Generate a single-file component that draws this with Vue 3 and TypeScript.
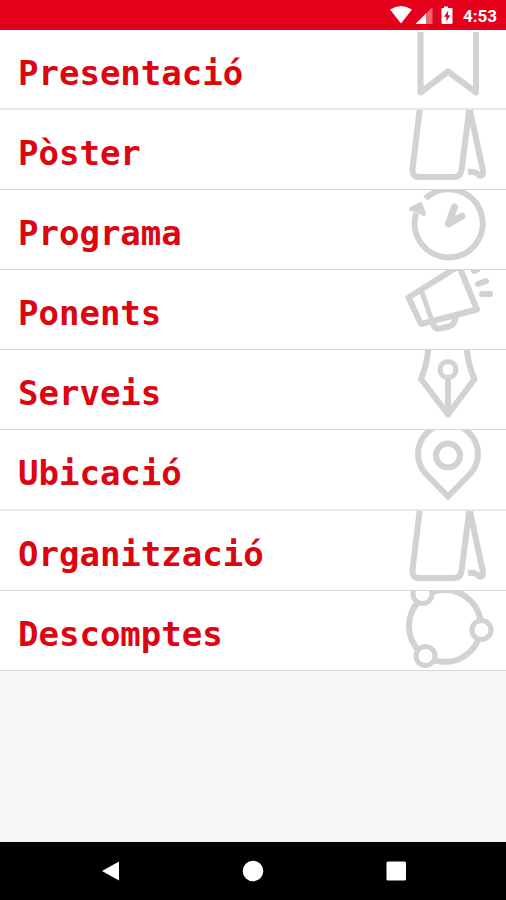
<script setup lang="ts">
interface MenuItem {
  label: string
  icon: string
  edge?: 'soft' | 'soft-tall'
}

const items: MenuItem[] = [
  { label: 'Presentació', icon: 'bookmark', edge: 'soft' },
  { label: 'Pòster', icon: 'board' },
  { label: 'Programa', icon: 'clock' },
  { label: 'Ponents', icon: 'megaphone' },
  { label: 'Serveis', icon: 'nib' },
  { label: 'Ubicació', icon: 'pin', edge: 'soft-tall' },
  { label: 'Organització', icon: 'board' },
  { label: 'Descomptes', icon: 'network' },
]
</script>

<template>
  <div class="screen">
    <header class="status">
      <svg class="signals" viewBox="0 0 64 20" aria-hidden="true">
        <path d="M0 4.500Q11 -2.500 22 4.500L11 18.500Z" />
        <path d="M42.500 2V19H25.500Z" opacity="0.4" />
        <path d="M36 8.500V19H25.500Z" />
        <path d="M54 3V1.500h4V3h3.500q1 0 1 1v14q0 1 -1 1h-9q-1 0 -1 -1V4q0 -1 1 -1Z" />
        <path class="bolt" d="M58.300 5.500L54 11.800h2.400V16.500L60.300 10.200h-2.500Z" />
      </svg>
      <time>4:53</time>
    </header>

    <nav class="menu" aria-label="Menú">
      <a v-for="item in items" :key="item.label" href="#" class="item" :class="item.edge">
        <span class="label">{{ item.label }}</span>
        <svg class="icon" viewBox="0 0 106 80" aria-hidden="true">
          <path v-if="item.icon === 'bookmark'" d="M20.500 2V62.500L48 41.500L76 62.500V2" />
          <g v-else-if="item.icon === 'board'">
            <path d="M20 -3L12.500 59Q12 67 19 67H54Q60.500 67 61.500 60L69.500 -2L83 61Q83.500 67 79 65.500Q76 61 68 62" />
            <path d="M67 0H73L71 8H68Z" class="solid" />
          </g>
          <g v-else-if="item.icon === 'clock'">
            <path d="M25.500 8.500A34 34 0 1 1 16.300 23" />
            <path d="M54.500 17L48.500 34L62 26" class="hands" />
            <path d="M11 19L20.500 14L24 24Q17 19.500 11 19Z" class="head" />
          </g>
          <g v-else-if="item.icon === 'megaphone'">
            <path d="M57 -3L8.500 27.500L21 54L77 39.500L59 -4" />
            <path d="M22 22L32 51" class="thin" />
            <path d="M32 52Q35 60 40 58.500L49 56.500Q56 54 55.500 45" />
            <path d="M74 1L77 0M78 14L86 11M82 24H90" class="rays" />
          </g>
          <g v-else-if="item.icon === 'nib'">
            <path d="M28.500 -3Q27 15 21 29L48 64.500L74.500 29Q68 15 66.500 -3" />
            <circle cx="48" cy="19.500" r="8" class="thin" />
            <path d="M48 28V63" />
          </g>
          <g v-else-if="item.icon === 'pin'">
            <path d="M48 66.500L26 44Q18 35 18 24A30 30 0 0 1 78 24Q78 35 70 44Z" class="sharp" />
            <circle cx="48" cy="25.500" r="12" />
          </g>
          <g v-else>
            <circle cx="45" cy="35" r="36" />
            <circle cx="22.500" cy="3" r="9.500" class="node" />
            <circle cx="81.500" cy="39" r="9.500" class="node" />
            <circle cx="25.500" cy="65" r="9.500" class="node" />
          </g>
        </svg>
      </a>
    </nav>

    <footer class="system">
      <button type="button" aria-label="Enrere">
        <svg viewBox="0 0 24 24"><path d="M21 2.500V21.500L4 12Z" /></svg>
      </button>
      <button type="button" aria-label="Inici">
        <svg viewBox="0 0 24 24"><circle cx="12" cy="12" r="10.300" /></svg>
      </button>
      <button type="button" aria-label="Recents">
        <svg viewBox="0 0 24 24"><rect x="2.500" y="2.500" width="19.500" height="19" rx="1.500" /></svg>
      </button>
    </footer>
  </div>
</template>

<style>
body {
  margin: 0;
}
</style>

<style scoped>
.screen {
  display: flex;
  flex-direction: column;
  min-height: 100vh;
  background: #f6f6f6;
}

.status {
  display: flex;
  align-items: center;
  justify-content: flex-end;
  gap: 9px;
  box-sizing: border-box;
  height: 30px;
  padding-right: 9px;
  background: #e2001a;
  color: #fff;
  font: 700 17px/30px Roboto, sans-serif;
}

.status time {
  padding-top: 2px;
}

.signals {
  width: 64px;
  height: 20px;
  fill: #fff;
}

.bolt {
  fill: #e2001a;
}

.menu {
  display: flex;
  flex-direction: column;
}

.item {
  display: flex;
  align-items: flex-start;
  justify-content: space-between;
  box-sizing: border-box;
  height: 80px;
  overflow: hidden;
  padding-left: 18px;
  border-bottom: 1px solid #d6d6d6;
  background: #fff;
  color: #dc0510;
  text-decoration: none;
}

.soft,
.soft-tall {
  border-bottom: 2px solid #e9e9e9;
}

.soft-tall {
  height: 81px;
}

.label {
  font: bold 34px/86px "DejaVu Sans Mono", monospace;
  white-space: nowrap;
}

.icon {
  flex: none;
  width: 106px;
  height: 80px;
  fill: none;
  stroke: #d2d2d2;
  stroke-width: 6px;
  stroke-linecap: butt;
  stroke-linejoin: round;
}

.thin {
  stroke-width: 5px;
}

.solid {
  fill: #d2d2d2;
  stroke-width: 1px;
}

.head {
  fill: #d2d2d2;
  stroke-width: 4px;
}

.hands {
  stroke-width: 7px;
  stroke-linecap: round;
}

.rays {
  stroke-width: 6px;
  stroke-linecap: round;
}

.sharp {
  stroke-linejoin: miter;
}

.node {
  fill: #fff;
  stroke-width: 5px;
}

.system {
  display: grid;
  grid-template-columns: repeat(3, 1fr);
  height: 58px;
  margin-top: auto;
  padding: 0 39px;
  background: #000;
}

.system button {
  display: grid;
  place-items: center;
  padding: 0;
  border: 0;
  background: none;
}

.system svg {
  width: 24px;
  height: 24px;
  fill: #fff;
}
</style>
